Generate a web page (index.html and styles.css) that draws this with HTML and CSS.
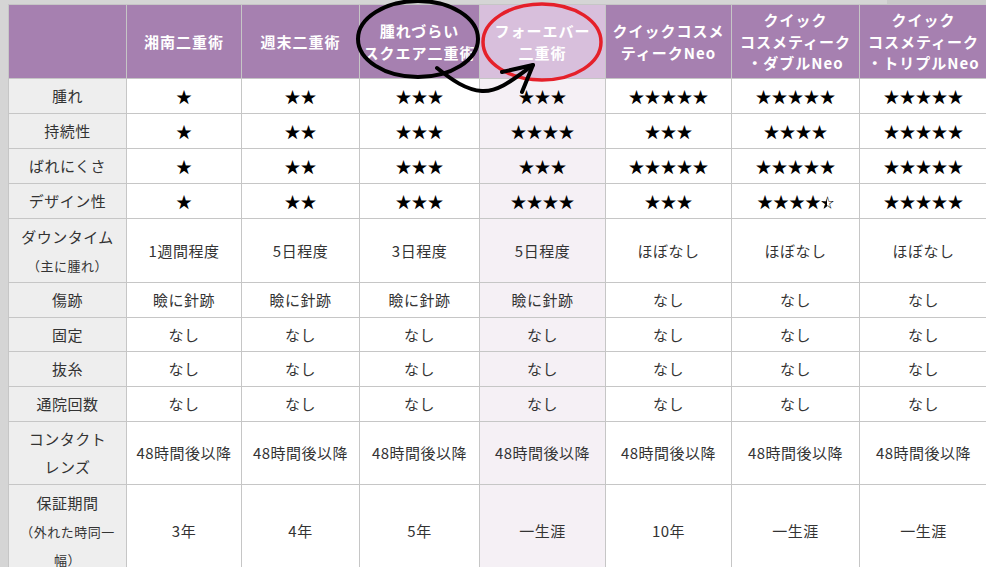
FILE: index.html
```html
<!DOCTYPE html>
<html lang="ja">
<head>
<meta charset="utf-8">
<title>二重術 比較表</title>
<link rel="stylesheet" href="styles.css">
</head>
<body>
<div class="topbar"><div class="topbar-shade"></div></div>
<div class="sheet">
  <div class="grid" role="table">
    <div class="c h" role="columnheader"></div>
    <div class="c h" role="columnheader">湘南二重術</div>
    <div class="c h" role="columnheader">週末二重術</div>
    <div class="c h" role="columnheader"><span>腫れづらい<br>スクエア二重術</span></div>
    <div class="c h hl" role="columnheader"><span>フォーエバー<br>二重術</span></div>
    <div class="c h" role="columnheader"><span>クイックコスメ<br>ティークNeo</span></div>
    <div class="c h" role="columnheader"><span>クイック<br>コスメティーク<br>・ダブルNeo</span></div>
    <div class="c h" role="columnheader"><span>クイック<br>コスメティーク<br>・トリプルNeo</span></div>

    <div class="c lab">腫れ</div>
    <div class="c st">★</div>
    <div class="c st">★★</div>
    <div class="c st">★★★</div>
    <div class="c st hl">★★★</div>
    <div class="c st">★★★★★</div>
    <div class="c st">★★★★★</div>
    <div class="c st">★★★★★</div>

    <div class="c lab">持続性</div>
    <div class="c st">★</div>
    <div class="c st">★★</div>
    <div class="c st">★★★</div>
    <div class="c st hl">★★★★</div>
    <div class="c st">★★★</div>
    <div class="c st">★★★★</div>
    <div class="c st">★★★★★</div>

    <div class="c lab">ばれにくさ</div>
    <div class="c st">★</div>
    <div class="c st">★★</div>
    <div class="c st">★★★</div>
    <div class="c st hl">★★★</div>
    <div class="c st">★★★★★</div>
    <div class="c st">★★★★★</div>
    <div class="c st">★★★★★</div>

    <div class="c lab">デザイン性</div>
    <div class="c st">★</div>
    <div class="c st">★★</div>
    <div class="c st">★★★</div>
    <div class="c st hl">★★★★</div>
    <div class="c st">★★★</div>
    <div class="c st"><span>★★★★<span class="half">☆<span class="half-fill">★</span></span></span></div>
    <div class="c st">★★★★★</div>

    <div class="c lab"><span class="two"><span class="l1">ダウンタイム</span><span class="l2">（主に腫れ）</span></span></div>
    <div class="c">1週間程度</div>
    <div class="c">5日程度</div>
    <div class="c">3日程度</div>
    <div class="c hl">5日程度</div>
    <div class="c">ほぼなし</div>
    <div class="c">ほぼなし</div>
    <div class="c">ほぼなし</div>

    <div class="c lab">傷跡</div>
    <div class="c">瞼に針跡</div>
    <div class="c">瞼に針跡</div>
    <div class="c">瞼に針跡</div>
    <div class="c hl">瞼に針跡</div>
    <div class="c">なし</div>
    <div class="c">なし</div>
    <div class="c">なし</div>

    <div class="c lab">固定</div>
    <div class="c">なし</div>
    <div class="c">なし</div>
    <div class="c">なし</div>
    <div class="c hl">なし</div>
    <div class="c">なし</div>
    <div class="c">なし</div>
    <div class="c">なし</div>

    <div class="c lab">抜糸</div>
    <div class="c">なし</div>
    <div class="c">なし</div>
    <div class="c">なし</div>
    <div class="c hl">なし</div>
    <div class="c">なし</div>
    <div class="c">なし</div>
    <div class="c">なし</div>

    <div class="c lab">通院回数</div>
    <div class="c">なし</div>
    <div class="c">なし</div>
    <div class="c">なし</div>
    <div class="c hl">なし</div>
    <div class="c">なし</div>
    <div class="c">なし</div>
    <div class="c">なし</div>

    <div class="c lab"><span class="multi">コンタクト<br>レンズ</span></div>
    <div class="c">48時間後以降</div>
    <div class="c">48時間後以降</div>
    <div class="c">48時間後以降</div>
    <div class="c hl">48時間後以降</div>
    <div class="c">48時間後以降</div>
    <div class="c">48時間後以降</div>
    <div class="c">48時間後以降</div>

    <div class="c lab"><span class="multi">保証期間<br><span class="small">（外れた時同一<br>幅）</span></span></div>
    <div class="c">3年</div>
    <div class="c">4年</div>
    <div class="c">5年</div>
    <div class="c hl">一生涯</div>
    <div class="c">10年</div>
    <div class="c">一生涯</div>
    <div class="c">一生涯</div>
  </div>
</div>

<svg class="marks" width="986" height="567" viewBox="0 0 986 567" aria-hidden="true">
  <ellipse cx="542" cy="42" rx="59" ry="38" fill="none" stroke="#e5202a" stroke-width="3.5"/>
  <ellipse cx="418" cy="39" rx="60" ry="38" fill="none" stroke="#000" stroke-width="4"/>
  <path d="M437 68 C452 80 466 90 482 91 C499 92 515 78 533 65" fill="none" stroke="#000" stroke-width="4" stroke-linecap="round"/>
  <path d="M502 72 L533 65 L522 92" fill="none" stroke="#000" stroke-width="4" stroke-linecap="round" stroke-linejoin="round"/>
</svg>
</body>
</html>
```

FILE: styles.css
```css
html, body {
  margin: 0;
  padding: 0;
}

body {
  width: 986px;
  height: 567px;
  overflow: hidden;
  position: relative;
  background: #d5d5d5;
  font-family: "Noto Sans CJK JP", "Noto Sans", sans-serif;
  color: #333;
}

.topbar {
  height: 4px;
  display: flex;
  justify-content: flex-end;
}

.topbar-shade {
  width: 99px;
  background: #c9c9c9;
}

.sheet {
  margin-left: 8px;
}

.grid {
  display: grid;
  width: 979px;
  grid-template-columns: 118px 115px 118px 120px 126px 126px 128px 128px;
  grid-template-rows: 74px 35px 35px 35px 35px 64px 35px 34px 35px 35px 63px 92px;
  border-top: 1px solid #c6c6c6;
  border-left: 1px solid #c6c6c6;
  background: #fff;
}

.c {
  box-sizing: border-box;
  display: flex;
  align-items: center;
  justify-content: center;
  text-align: center;
  border-right: 1px solid #c6c6c6;
  border-bottom: 1px solid #c6c6c6;
  font-size: 15px;
  letter-spacing: 0.5px;
  line-height: 20px;
  background: #fff;
}

.c.hl {
  background: #f5f0f5;
}

.c.h {
  background: #a680b0;
  color: #fff;
  font-weight: 700;
  font-size: 15px;
  letter-spacing: 1px;
  line-height: 21.5px;
}

.c.h.hl {
  background: #d8bfdc;
}

.c.lab {
  background: #eeeeee;
}

.st {
  color: #000;
  font-size: 16px;
  letter-spacing: 0;
}

.half {
  position: relative;
  display: inline-block;
  font-size: 13px;
  line-height: 16px;
  vertical-align: 1px;
}

.half-fill {
  position: absolute;
  left: 0;
  top: 0;
  color: transparent;
  background: linear-gradient(90deg, #000 50%, rgba(0, 0, 0, 0) 50%);
  -webkit-background-clip: text;
  background-clip: text;
}

.two {
  display: block;
}

.l1 {
  display: block;
  line-height: 29px;
}

.l2 {
  display: block;
  font-size: 13px;
  line-height: 29px;
}

.multi {
  line-height: 28px;
}

.small {
  font-size: 13px;
  line-height: 27px;
}

.marks {
  position: absolute;
  top: 0;
  left: 0;
  pointer-events: none;
}
```
